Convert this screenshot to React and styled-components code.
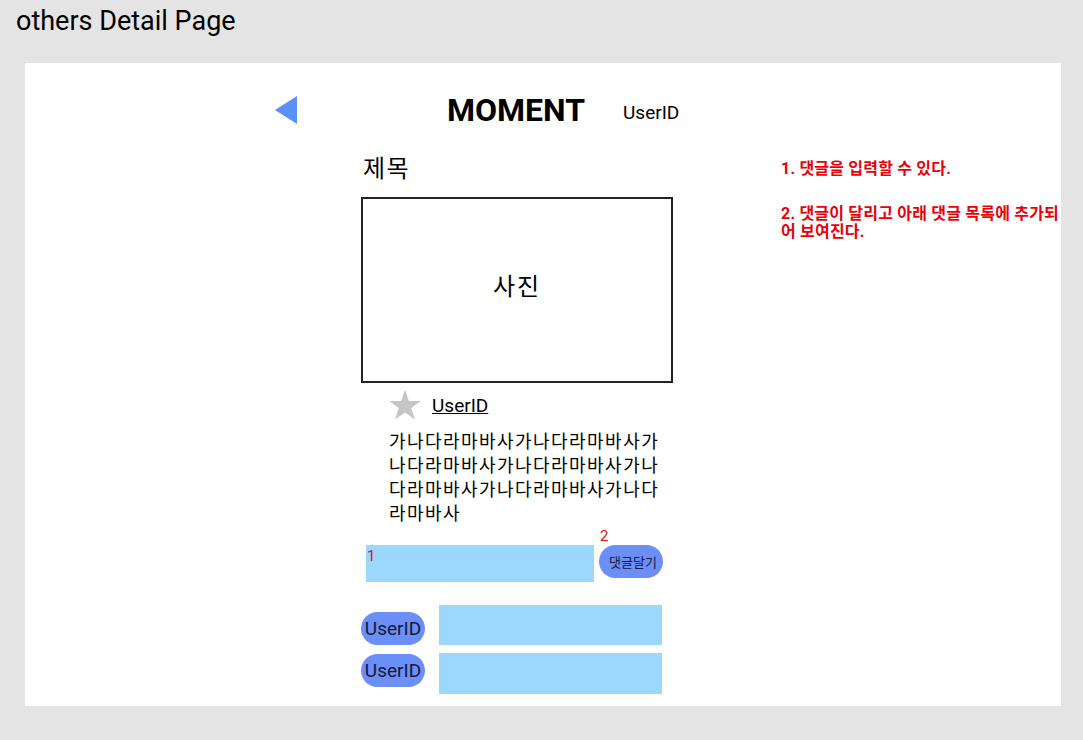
import React from 'react';
import styled, { createGlobalStyle } from 'styled-components';

const GlobalStyle = createGlobalStyle`
    html, body {
        margin: 0;
        padding: 0;
        background: #e4e4e4;
    }
    body {
        font-family: Roboto, "Noto Sans CJK KR", sans-serif;
        color: #000;
    }
`;

const Page = styled.div`
    width: 1083px;
    height: 740px;
    padding: 5px 22px 0 0;
    box-sizing: border-box;
    background: #e4e4e4;
`;

const PageTitle = styled.h1`
    margin: 0 0 0 16px;
    font-size: 27px;
    line-height: 32px;
    font-weight: 400;
`;

const Card = styled.div`
    margin: 26px 0 0 25px;
    height: 643px;
    box-sizing: border-box;
    background: #fff;
    padding-top: 27px;
`;

const Header = styled.div`
    display: flex;
    align-items: center;
    height: 40px;
    padding-left: 250px;
`;

const BackArrow = styled.div`
    width: 0;
    height: 0;
    border-top: 14.5px solid transparent;
    border-bottom: 14.5px solid transparent;
    border-right: 22px solid #5b8ff9;
    cursor: pointer;
`;

const Logo = styled.div`
    margin-left: 150px;
    font-size: 32px;
    line-height: 40px;
    font-weight: 700;
`;

const HeaderUser = styled.div`
    margin: 5px 0 0 38px;
    font-size: 19px;
    line-height: 40px;
`;

const Body = styled.div`
    display: flex;
    align-items: flex-start;
    padding-left: 336px;
`;

const Main = styled.div`
    width: 312px;
    display: flex;
    flex-direction: column;
`;

const Title = styled.div`
    margin: 23px 0 0 2px;
    font-size: 24px;
    line-height: 32px;
    letter-spacing: 1.5px;
`;

const Photo = styled.div`
    margin-top: 12px;
    height: 186px;
    box-sizing: border-box;
    border: 2px solid #222;
    display: flex;
    align-items: center;
    justify-content: center;
    padding-bottom: 12px;
    font-size: 24px;
    letter-spacing: 2px;
`;

const Author = styled.div`
    margin-top: 6px;
    display: flex;
    align-items: center;
    gap: 10px;
    height: 32px;
    padding-left: 27px;
`;

const AuthorName = styled.a`
    font-size: 19px;
    color: #000;
    text-decoration: underline;
`;

const Content = styled.p`
    margin: 9px 0 0;
    padding-left: 28px;
    padding-right: 10px;
    font-size: 18px;
    line-height: 24px;
    letter-spacing: 1.45px;
    word-break: break-all;
`;

const Form = styled.div`
    margin-top: 19px;
    display: flex;
    align-items: flex-start;
    gap: 5px;
    padding-left: 5px;
`;

const InputBox = styled.div`
    position: relative;
    width: 228px;
    height: 37px;
    background: #9cd8fd;
`;

const Marker = styled.span`
    position: absolute;
    color: #e01010;
    font-size: 15px;
    line-height: 15px;
    left: ${p => p.$left}px;
    top: ${p => p.$top}px;
`;

const SubmitWrap = styled.div`
    position: relative;
`;

const Pill = styled.div`
    width: 64px;
    height: 33px;
    border-radius: 17px;
    background: #6b8ef7;
    display: flex;
    align-items: center;
    justify-content: center;
    font-size: ${p => p.$size}px;
    color: #15173a;
    box-sizing: border-box;
    padding-left: ${p => p.$pad || 0}px;
    margin-top: ${p => p.$offset || 0}px;
`;

const Comments = styled.div`
    margin-top: 23px;
    display: flex;
    flex-direction: column;
    gap: 8px;
`;

const CommentRow = styled.div`
    display: flex;
    align-items: flex-start;
    gap: 14px;
`;

const CommentBox = styled.div`
    width: 223px;
    height: ${p => p.$h}px;
    background: #9cd8fd;
`;

const Notes = styled.div`
    margin-left: 108px;
    padding-top: 30px;
    color: #e8000b;
    font-size: 16px;
    font-weight: 700;
    line-height: 18px;
    letter-spacing: 0.2px;
`;

const Note = styled.p`
    margin: 0 0 27px;
`;

const Star = () => (
    <svg width="34" height="32" viewBox="0 0 24 23">
        <path
            d="M12 0.5l2.8 8.1h8.6l-6.9 5.1 2.6 8.2L12 16.9l-7.1 5 2.6-8.2L0.6 8.6h8.6z"
            fill="#c6c6c6"
        />
    </svg>
);

const comments = [
    { id: 1, user: 'UserID', h: 40, offset: 7 },
    { id: 2, user: 'UserID', h: 41, offset: 1 },
];

const App = () => {
    return <Page>
        <GlobalStyle />
        <PageTitle>others Detail Page</PageTitle>
        <Card>
            <Header>
                <BackArrow />
                <Logo>MOMENT</Logo>
                <HeaderUser>UserID</HeaderUser>
            </Header>
            <Body>
                <Main>
                    <Title>제목</Title>
                    <Photo>사진</Photo>
                    <Author>
                        <Star />
                        <AuthorName>UserID</AuthorName>
                    </Author>
                    <Content>
                        가나다라마바사가나다라마바사가나다라마바사가나다라마바사가나다라마바사가나다라마바사가나다라마바사
                    </Content>
                    <Form>
                        <InputBox>
                            <Marker $left={1} $top={4}>1</Marker>
                        </InputBox>
                        <SubmitWrap>
                            <Marker $left={1} $top={-16}>2</Marker>
                            <Pill $size={13} $pad={4}>댓글달기</Pill>
                        </SubmitWrap>
                    </Form>
                    <Comments>
                        { comments.map(c =>
                            <CommentRow key={c.id}>
                                <Pill $size={19} $offset={c.offset}>{c.user}</Pill>
                                <CommentBox $h={c.h} />
                            </CommentRow>
                        )}
                    </Comments>
                </Main>
                <Notes>
                    <Note>1. 댓글을 입력할 수 있다.</Note>
                    <Note>2. 댓글이 달리고 아래 댓글 목록에 추가되<br />어 보여진다.</Note>
                </Notes>
            </Body>
        </Card>
    </Page>
};

export default App;
